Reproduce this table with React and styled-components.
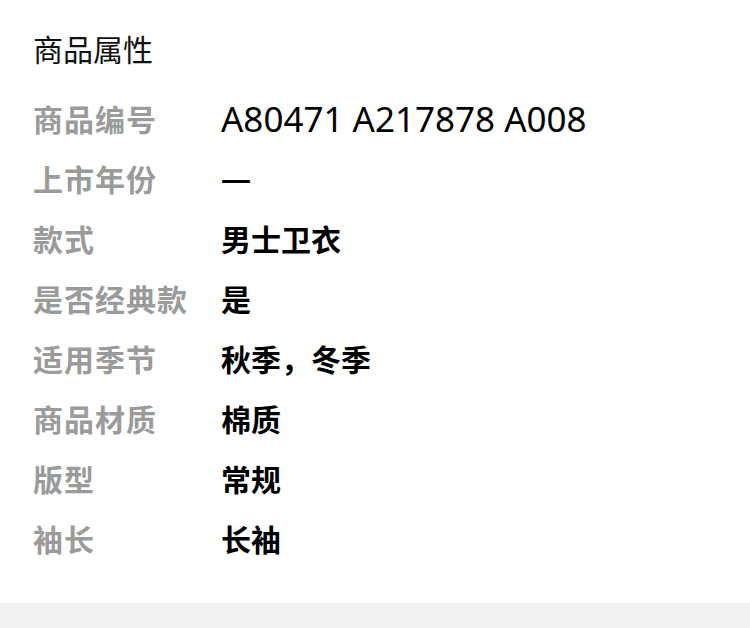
import React from 'react';
import styled, { createGlobalStyle } from 'styled-components';

const GlobalStyle = createGlobalStyle`
  html, body {
    margin: 0;
    padding: 0;
    background: #f2f2f2;
  }
  body {
    font-family: "Noto Sans", "Noto Sans CJK SC", sans-serif;
  }
`;

const SectionStyled = styled.section`
  background: #ffffff;
  padding: 20px 33px 35px;
`;

const TitleStyled = styled.h2`
  margin: 0 0 8px;
  height: 60px;
  line-height: 60px;
  font-size: 30px;
  font-weight: 400;
  color: #111111;
`;

const RowStyled = styled.div`
  display: grid;
  grid-template-columns: 188px 1fr;
  align-items: center;
  height: 60px;
`;

const LabelStyled = styled.span`
  font-size: 30px;
  font-weight: 700;
  color: #9b9b9b;
  letter-spacing: 1px;
`;

const ValueStyled = styled.span`
  font-size: ${({ $latin }) => ($latin ? 35 : 30)}px;
  font-weight: ${({ $latin }) => ($latin ? 400 : 600)};
  color: #000000;
`;

const FooterStyled = styled.div`
  height: 25px;
  background: #f2f2f2;
`;

const attrs = [
  { label: '商品编号', value: 'A80471 A217878 A008', latin: true },
  { label: '上市年份', value: '—' },
  { label: '款式', value: '男士卫衣' },
  { label: '是否经典款', value: '是' },
  { label: '适用季节', value: '秋季，冬季' },
  { label: '商品材质', value: '棉质' },
  { label: '版型', value: '常规' },
  { label: '袖长', value: '长袖' },
];

const App = () => (
  <>
    <GlobalStyle />
    <SectionStyled>
      <TitleStyled>商品属性</TitleStyled>
      {attrs.map(({ label, value, latin }) => (
        <RowStyled key={label}>
          <LabelStyled>{label}</LabelStyled>
          <ValueStyled $latin={latin}>{value}</ValueStyled>
        </RowStyled>
      ))}
    </SectionStyled>
    <FooterStyled />
  </>
);

export default App;
